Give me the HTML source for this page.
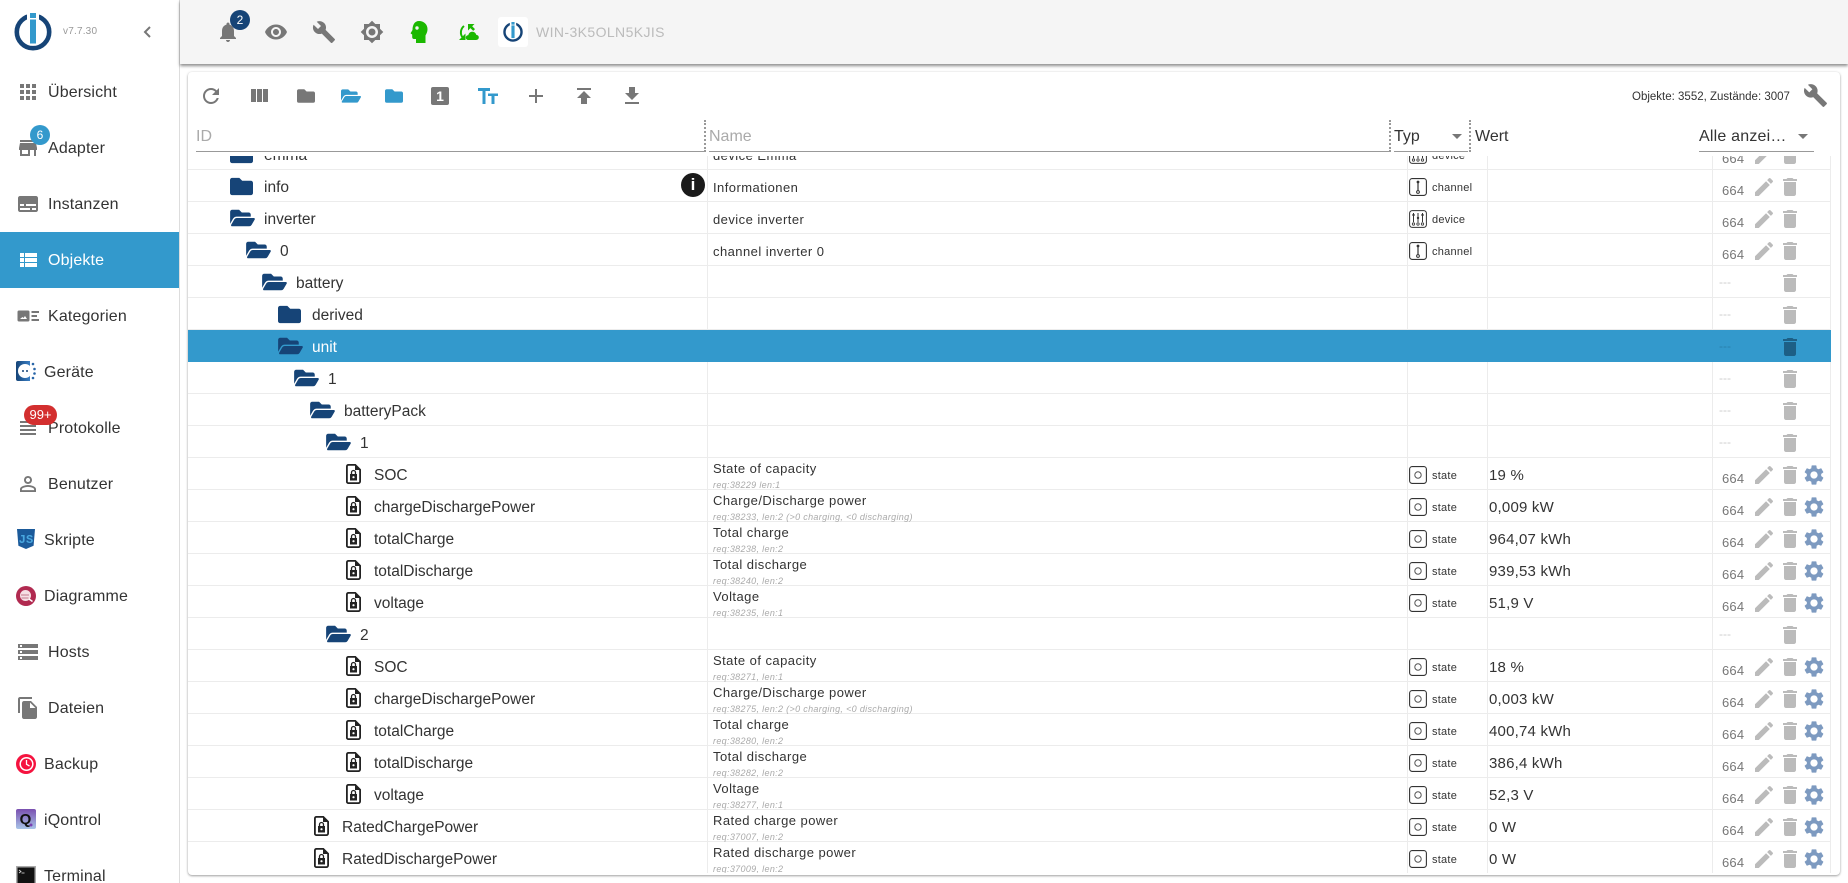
<!DOCTYPE html>
<html lang="de"><head><meta charset="utf-8"><title>Objekte</title>
<style>
html,body{margin:0;padding:0;width:1848px;height:883px;overflow:hidden;background:#fff;font-family:"Liberation Sans",sans-serif;color:#333}
.a,.a>*{position:absolute}
svg{position:absolute;display:block;overflow:visible}
#side{left:0;top:0;width:179px;height:883px;border-right:1px solid #ddd;overflow:hidden;background:#fff}
.n{position:absolute;left:0;width:179px;height:56px;line-height:56px;font-size:16px;letter-spacing:.15px;color:#333}
.n span{position:absolute;left:48px;top:1px}
.n.m span{left:44px}
.n svg{left:16px;top:16px;width:24px;height:24px;fill:#777}
.n.s{background:#39c;color:#fff}.n.s svg{fill:#fff}
#top{left:180px;top:0;width:1668px;height:64px;background:#f5f5f5;box-shadow:0 2px 3px rgba(0,0,0,.45)}
#top svg{fill:#777}
.badge{position:absolute;border-radius:10px;color:#fff;text-align:center;font-size:12px;height:20px;line-height:20px}
#panel{left:188px;top:72px;width:1652px;height:803px;background:#fff;border-radius:4px;box-shadow:0 1px 2px rgba(0,0,0,.35),0 0 3px rgba(0,0,0,.08)}
.t{fill:#777;width:24px;height:24px;top:84px}
.hd{position:absolute;top:126px;line-height:22px;font-size:16px}
.ul{position:absolute;top:151px;height:1px;background:#999}
.dot{position:absolute;top:120px;height:32px;border-left:2px dotted #999}
#list{left:188px;top:154px;width:1643px;height:719px;overflow:hidden;clip-path:inset(2px -2px 0 0)}
.v{position:absolute;top:0;width:1px;height:719px;background:#ececec}
.r{position:absolute;left:0;width:1643px;height:32px;border-bottom:1px solid #ececec;box-sizing:border-box}
.r.sel{background:#39c;height:32px;border:0}
.f{width:23px;height:23px;top:4.500px;fill:#164477}
.o{width:25px;height:22px;top:5px;fill:#164477}
.d{position:absolute;top:8px;line-height:20px;font-size:15.5px;color:#333;white-space:nowrap}
.nm{position:absolute;left:525px;top:8px;line-height:20px;font-size:13px;letter-spacing:.45px;color:#333;white-space:nowrap}
.nm.x{top:1px;line-height:20px}
.sb{position:absolute;left:525px;top:20px;line-height:14px;font-size:9px;font-style:italic;color:#aaa;white-space:nowrap;letter-spacing:.33px}
.ti{left:1221px;top:8px;width:18px;height:18px;fill:none;stroke:#333}
.tt{position:absolute;left:1244px;top:8px;line-height:20px;font-size:11px;letter-spacing:.25px;color:#333}
.vl{position:absolute;left:1301px;top:8px;line-height:20px;font-size:15px;letter-spacing:.2px;color:#333}
.rt{position:absolute;left:1534px;top:11px;line-height:20px;font-size:13px;letter-spacing:.2px;color:#777}
.dsh{position:absolute;left:1531px;top:6px;line-height:20px;font-size:12px;color:#ccc}
.p,.b,.g{width:24px;height:24px;top:5px}
.p{left:1564px;fill:#bbb}.b{left:1590px;fill:#bbb}.g{left:1614px;fill:#7d9ac0}
.lk{width:15px;height:20px;top:6px}
</style></head><body>
<svg width="0" height="0" style="position:absolute">
<defs>
<symbol id="apps" viewBox="0 0 24 24"><path d="M4 8h4V4H4v4zm6 12h4v-4h-4v4zm-6 0h4v-4H4v4zm0-6h4v-4H4v4zm6 0h4v-4h-4v4zm6-10v4h4V4h-4zm-6 4h4V4h-4v4zm6 6h4v-4h-4v4zm0 6h4v-4h-4v4z"/></symbol>
<symbol id="store" viewBox="0 0 24 24"><path d="M20 4H4v2h16V4zm1 10v-2l-1-5H4l-1 5v2h1v6h10v-6h4v6h2v-6h1zm-9 4H6v-4h6v4z"/></symbol>
<symbol id="subt" viewBox="0 0 24 24"><path d="M20 4H4c-1.100 0-2 .9-2 2v12c0 1.100.9 2 2 2h16c1.100 0 2-.9 2-2V6c0-1.100-.9-2-2-2zM4 12h4v2H4v-2zm10 6H4v-2h10v2zm6 0h-4v-2h4v2zm0-4H10v-2h10v2z"/></symbol>
<symbol id="vlist" viewBox="0 0 24 24"><path d="M4 14h4v-4H4v4zm0 5h4v-4H4v4zM4 9h4V5H4v4zm5 5h12v-4H9v4zm0 5h12v-4H9v4zM9 5v4h12V5H9z"/></symbol>
<symbol id="kat" viewBox="0 0 24 24"><path d="M3 6.500h9a1.500 1.500 0 0 1 1.500 1.500v8a1.500 1.500 0 0 1-1.500 1.500H3A1.500 1.500 0 0 1 1.500 16V8A1.500 1.500 0 0 1 3 6.500zM4 15h7l-2-3-1.500 2-1-1z"/><path d="M15.500 7H23v2h-7.500zM15.500 11H21v2h-5.500zM15.500 15H23v2h-7.500z"/></symbol>
<symbol id="head" viewBox="0 0 24 24"><path d="M4 15h16v-2H4v2zm0 4h16v-2H4v2zm0-8h16V9H4v2zm0-6v2h16V5H4z"/></symbol>
<symbol id="person" viewBox="0 0 24 24"><path d="M12 5.900c1.160 0 2.100.940 2.100 2.100s-.940 2.100-2.100 2.100S9.900 9.160 9.900 8s.940-2.100 2.100-2.100m0 9c2.970 0 6.100 1.460 6.100 2.100v1.100H5.900V17c0-.640 3.130-2.100 6.100-2.100M12 4C9.790 4 8 5.790 8 8s1.790 4 4 4 4-1.790 4-4-1.790-4-4-4zm0 9c-2.670 0-8 1.340-8 4v3h16v-3c0-2.660-5.330-4-8-4z"/></symbol>
<symbol id="storage" viewBox="0 0 24 24"><path d="M2 20h20v-4H2v4zm2-3h2v2H4v-2zM2 4v4h20V4H2zm4 3H4V5h2v2zm-4 7h20v-4H2v4zm2-3h2v2H4v-2z"/></symbol>
<symbol id="copy" viewBox="0 0 24 24"><path d="M16 1H4c-1.100 0-2 .9-2 2v14h2V3h12V1zm-1 4l6 6v10c0 1.100-.9 2-2 2H7.990C6.890 23 6 22.100 6 21l.010-14c0-1.100.890-2 1.990-2h7zm-1 7h5.500L14 6.500V12z"/></symbol>
<symbol id="bell" viewBox="0 0 24 24"><path d="M12 22c1.100 0 2-.9 2-2h-4c0 1.100.890 2 2 2zm6-6v-5c0-3.070-1.640-5.640-4.500-6.320V4c0-.830-.670-1.500-1.500-1.500s-1.500.670-1.500 1.500v.680C7.630 5.360 6 7.920 6 11v5l-2 2v1h16v-1l-2-2z"/></symbol>
<symbol id="eye" viewBox="0 0 24 24"><path d="M12 4.500C7 4.500 2.730 7.610 1 12c1.730 4.390 6 7.500 11 7.500s9.270-3.110 11-7.500c-1.730-4.390-6-7.500-11-7.500zM12 17c-2.760 0-5-2.240-5-5s2.240-5 5-5 5 2.240 5 5-2.240 5-5 5zm0-8c-1.660 0-3 1.340-3 3s1.340 3 3 3 3-1.340 3-3-1.340-3-3-3z"/></symbol>
<symbol id="build" viewBox="0 0 24 24"><path d="M22.700 19l-9.100-9.100c.9-2.300.4-5-1.500-6.900-2-2-5-2.400-7.400-1.300L9 6 6 9 1.600 4.700C.4 7.100.9 10.100 2.900 12.100c1.900 1.900 4.600 2.400 6.900 1.500l9.100 9.100c.4.4 1 .4 1.400 0l2.300-2.300c.5-.4.5-1.100.1-1.400z"/></symbol>
<symbol id="bright" viewBox="0 0 24 24"><path fill-rule="evenodd" d="M20 8.690V4h-4.690L12 .69 8.690 4H4v4.690L.69 12 4 15.310V20h4.690L12 23.310 15.310 20H20v-4.690L23.310 12 20 8.690zM12 18c-3.310 0-6-2.690-6-6s2.690-6 6-6 6 2.690 6 6-2.690 6-6 6zm0-9.500a3.500 3.500 0 1 0 0 7 3.500 3.500 0 0 0 0-7z"/></symbol>
<symbol id="refresh" viewBox="0 0 24 24"><path d="M17.650 6.350C16.200 4.900 14.210 4 12 4c-4.420 0-7.990 3.580-7.990 8s3.570 8 7.990 8c3.730 0 6.840-2.550 7.730-6h-2.080c-.820 2.330-3.040 4-5.650 4-3.310 0-6-2.690-6-6s2.690-6 6-6c1.660 0 3.140.690 4.220 1.780L13 11h7V4l-2.350 2.350z"/></symbol>
<symbol id="cols" viewBox="0 0 24 24"><path d="M10 18h5V5h-5v13zm-6 0h5V5H4v13zM16 5v13h5V5h-5z"/></symbol>
<symbol id="fold" viewBox="0 0 512 512"><path d="M464 128H272l-64-64H48C21.490 64 0 85.490 0 112v288c0 26.510 21.490 48 48 48h416c26.510 0 48-21.490 48-48V176c0-26.510-21.490-48-48-48z"/></symbol>
<symbol id="open" viewBox="0 0 576 512"><path d="M572.694 292.093L500.270 416.248A63.997 63.997 0 0 1 444.989 448H45.025c-18.523 0-30.064-20.093-20.731-36.093l72.424-124.155A64 64 0 0 1 152 256h399.964c18.523 0 30.064 20.093 20.730 36.093zM152 224h328v-48c0-26.510-21.490-48-48-48H272l-64-64H48C21.490 64 0 85.490 0 112v278.046l69.077-118.418C86.214 242.250 117.989 224 152 224z"/></symbol>
<symbol id="plus" viewBox="0 0 24 24"><path d="M19 13h-6v6h-2v-6H5v-2h6V5h2v6h6v2z"/></symbol>
<symbol id="pub" viewBox="0 0 24 24"><path d="M5 4v2h14V4H5zm0 10h4v6h6v-6h4l-7-7-7 7z"/></symbol>
<symbol id="get" viewBox="0 0 24 24"><path d="M19 9h-4V3H9v6H5l7 7 7-7zM5 18v2h14v-2H5z"/></symbol>
<symbol id="ed" viewBox="0 0 24 24"><path d="M3 17.250V21h3.750L17.810 9.940l-3.750-3.750L3 17.250zM20.710 7.040c.390-.390.390-1.020 0-1.410l-2.340-2.340c-.390-.390-1.020-.390-1.410 0l-1.830 1.830 3.750 3.750 1.830-1.830z"/></symbol>
<symbol id="del" viewBox="0 0 24 24"><path d="M6 19c0 1.100.9 2 2 2h8c1.100 0 2-.9 2-2V7H6v12zM19 4h-3.500l-1-1h-5l-1 1H5v2h14V4z"/></symbol>
<symbol id="gear" viewBox="0 0 24 24"><path d="M19.140 12.940c.040-.300.060-.610.060-.940 0-.320-.020-.640-.070-.940l2.030-1.580c.180-.140.230-.410.120-.610l-1.920-3.320c-.120-.220-.370-.290-.590-.220l-2.390.960c-.500-.380-1.030-.700-1.620-.940L14.400 2.810c-.040-.240-.240-.410-.480-.410h-3.840c-.240 0-.430.170-.470.410L9.250 5.350c-.590.240-1.130.570-1.620.940L5.240 5.330c-.220-.080-.470 0-.590.220L2.740 8.870c-.120.210-.080.470.120.610l2.030 1.580c-.050.300-.090.630-.09.940s.020.640.070.940l-2.030 1.580c-.180.140-.230.410-.12.610l1.920 3.320c.120.220.370.290.590.220l2.390-.960c.500.380 1.030.700 1.620.940l.360 2.540c.050.240.240.410.480.410h3.840c.240 0 .440-.170.470-.410l.360-2.540c.590-.240 1.130-.560 1.620-.940l2.390.960c.220.080.470 0 .590-.220l1.920-3.320c.120-.220.070-.470-.120-.610l-2.010-1.580zM12 15.600c-1.980 0-3.600-1.620-3.600-3.600s1.620-3.600 3.600-3.600 3.600 1.620 3.600 3.600-1.620 3.600-3.600 3.600z"/></symbol>
<symbol id="logo" viewBox="0 0 38 38"><circle cx="19" cy="19" r="16.200" fill="none" stroke="#164477" stroke-width="4.600"/><rect x="13" y="0" width="12" height="12" fill="#fff"/><rect x="16" y="0" width="6" height="5" fill="#39c"/><rect x="16" y="6.500" width="6" height="24" fill="#39c"/></symbol>
<symbol id="lock" viewBox="0 0 15 20"><path fill="none" stroke="#222" stroke-width="1.800" d="M2.300.9h7l4.800 4.800v11.700a1.700 1.700 0 0 1-1.700 1.700H2.300a1.400 1.400 0 0 1-1.400-1.700V2.600A1.700 1.700 0 0 1 2.300.9z"/><path fill="#222" d="M9 .8l5.200 5.200H9z"/><path fill="#222" d="M4 10h7v6.500H4z"/><path fill="none" stroke="#222" stroke-width="1.300" d="M5.500 10V8.500a2 2 0 0 1 4 0V10"/><circle cx="7.500" cy="13.200" r="1.100" fill="#fff"/></symbol>
<symbol id="st" viewBox="0 0 18 18"><rect x=".6" y=".6" width="16.800" height="16.800" rx="2.600" stroke-width="1.100"/><circle cx="9" cy="9" r="3.200" stroke-width="1" stroke="#555"/></symbol>
<symbol id="ch" viewBox="0 0 18 18"><rect x=".6" y=".6" width="16.800" height="16.800" rx="2.600" stroke-width="1.100"/><circle cx="9" cy="4" r="1.400" fill="#333" stroke="none"/><path d="M9 4v9" stroke-width="1.200"/><circle cx="9" cy="14" r="1.400" stroke-width="1"/></symbol>
<symbol id="dv" viewBox="0 0 18 18"><rect x=".6" y=".6" width="16.800" height="16.800" rx="2.600" stroke-width="1"/><path d="M4.500 3v9M9 3v9M13.500 3v9" stroke-width="1"/><circle cx="4.500" cy="5" r="1.200" fill="#333" stroke="none"/><circle cx="9" cy="8" r="1.200" fill="#333" stroke="none"/><circle cx="13.500" cy="5" r="1.200" fill="#333" stroke="none"/><circle cx="4.500" cy="14" r="1.200" stroke-width=".8"/><circle cx="9" cy="14" r="1.200" stroke-width=".8"/><circle cx="13.500" cy="14" r="1.200" stroke-width=".8"/></symbol>
</defs></svg>

<div id="side" class="a">
<svg style="left:14px;top:13px;width:38px;height:38px"><use href="#logo"/></svg>
<div style="left:63px;top:26px;font-size:10px;line-height:12px;color:#999;letter-spacing:.2px">v7.7.30</div>
<svg style="left:141px;top:25px;width:12px;height:14px" viewBox="0 0 12 14"><path d="M9 2L4 7l5 5" fill="none" stroke="#777" stroke-width="2"/></svg>
<div class="n" style="top:64px"><svg><use href="#apps"/></svg><span>Übersicht</span></div>
<div class="n" style="top:120px"><svg><use href="#store"/></svg><span>Adapter</span></div>
<div class="n" style="top:176px"><svg><use href="#subt"/></svg><span>Instanzen</span></div>
<div class="n s" style="top:232px"><svg><use href="#vlist"/></svg><span>Objekte</span></div>
<div class="n" style="top:288px"><svg><use href="#kat"/></svg><span>Kategorien</span></div>
<div class="n m" style="top:344px"><svg style="left:16px;top:17px;width:20px;height:20px" viewBox="0 0 20 20"><defs><linearGradient id="gd" x1="0" x2="1"><stop offset="0" stop-color="#164477"/><stop offset="1" stop-color="#3a7fc4"/></linearGradient></defs><path d="M2 0h12v20H2a2 2 0 0 1-2-2V2a2 2 0 0 1 2-2z" fill="url(#gd)"/><circle cx="9" cy="10" r="7" fill="#fff"/><circle cx="7" cy="10" r="1" fill="#164477"/><circle cx="11" cy="10" r="1" fill="#164477"/><circle cx="17" cy="3" r="1.300" fill="#2a66a8"/><circle cx="18.500" cy="8" r="1.300" fill="#2a66a8"/><circle cx="18.500" cy="12.500" r="1.300" fill="#2a66a8"/><circle cx="17" cy="17" r="1.300" fill="#2a66a8"/></svg><span>Geräte</span></div>
<div class="n" style="top:400px"><svg><use href="#head"/></svg><span>Protokolle</span></div>
<div class="n" style="top:456px"><svg><use href="#person"/></svg><span>Benutzer</span></div>
<div class="n m" style="top:512px"><svg style="left:17px;top:17px;width:18px;height:20px" viewBox="0 0 18 20"><path d="M0 0h18l-1.400 16.800L9 20l-7.600-3.200z" fill="#1b5a9a"/><text x="9" y="14" font-size="12" font-weight="700" text-anchor="middle" fill="#4aa8e0" font-family="Liberation Mono, monospace">JS</text></svg><span>Skripte</span></div>
<div class="n m" style="top:568px"><svg style="left:16px;top:18px;width:20px;height:20px" viewBox="0 0 20 20"><circle cx="10" cy="10" r="10" fill="#b12a50"/><circle cx="9.500" cy="9.500" r="5.500" fill="#f5dfe4"/><path d="M5 9h8M5.500 12h7" stroke="#c47a8c" stroke-width="1"/><path d="M13 13l3.500 2.500" stroke="#fff" stroke-width="1.500"/></svg><span>Diagramme</span></div>
<div class="n" style="top:624px"><svg><use href="#storage"/></svg><span>Hosts</span></div>
<div class="n" style="top:680px"><svg><use href="#copy"/></svg><span>Dateien</span></div>
<div class="n m" style="top:736px"><svg style="left:16px;top:18px;width:20px;height:20px" viewBox="0 0 20 20"><circle cx="10" cy="10" r="10" fill="#f5133f"/><circle cx="10.500" cy="10" r="6.300" fill="none" stroke="#fff" stroke-width="1.500"/><path d="M10.500 6v4.300l3 1.700" fill="none" stroke="#fff" stroke-width="1.300"/></svg><span>Backup</span></div>
<div class="n m" style="top:792px"><svg style="left:16px;top:17px;width:20px;height:20px" viewBox="0 0 20 20"><defs><linearGradient id="gq" x1="0" y1="0" x2="0" y2="1"><stop offset="0" stop-color="#7a4fb0"/><stop offset="1" stop-color="#a8c4e8"/></linearGradient></defs><rect width="20" height="20" rx="2" fill="url(#gq)"/><text x="9.500" y="15" font-size="15" font-weight="700" text-anchor="middle" fill="#111" font-family="Liberation Sans, sans-serif">Q</text><circle cx="15" cy="16" r="1.500" fill="#7a3fb0"/></svg><span>iQontrol</span></div>
<div class="n m" style="top:848px"><svg style="left:16px;top:18px;width:20px;height:20px" viewBox="0 0 20 20"><rect width="20" height="20" fill="#aaa"/><rect x="1.500" y="1.500" width="17" height="17" fill="#111"/><path d="M3 4l2 1.500L3 7" fill="none" stroke="#ddd" stroke-width=".8"/><path d="M5.500 7h3" stroke="#ddd" stroke-width=".8"/></svg><span>Terminal</span></div>
<div class="badge" style="left:30px;top:125px;width:20px;background:#39c">6</div>
<div class="badge" style="left:24px;top:405px;width:33px;background:#d32f2f;font-size:13px">99+</div>
</div>

<div id="top" class="a">
<svg style="left:36px;top:20px;width:24px;height:24px"><use href="#bell"/></svg>
<div class="badge" style="left:50px;top:10px;width:20px;background:#164477">2</div>
<svg style="left:84px;top:20px;width:24px;height:24px"><use href="#eye"/></svg>
<svg style="left:132px;top:20px;width:24px;height:24px"><use href="#build"/></svg>
<svg style="left:180px;top:20px;width:24px;height:24px"><use href="#bright"/></svg>
<svg style="left:231px;top:21px;width:17px;height:22px;fill:#1bb800" viewBox="0 0 17 22"><path d="M8 0c5 0 8.500 3.500 8.500 8 0 3-1 4.500-2 6.500V22H5v-4H3c-1.200 0-1.800-.8-1.800-2v-2.500L0 12.700c-.5-.3-.4-.8 0-1.200L1.500 9C1.500 4 3.500 0 8 0z"/><circle cx="6" cy="7" r="1.700" fill="#f5f5f5"/></svg>
<svg style="left:278px;top:23px;width:22px;height:19px" viewBox="0 0 22 19"><path d="M6 3C2.300 6 2 11.500 4.700 14.500" fill="none" stroke="#1bb800" stroke-width="2"/><path d="M1 17h6.500v-6.500z" fill="#1bb800"/><path d="M10 1h6.500l-2.300 2.300 2.800 2.800-1.800 1.800-2.800-2.800L10 7.500z" fill="#1bb800"/><path d="M10.500 17c-1.600 0-2.700-1.100-2.700-2.400 0-1.400 1.100-2.400 2.500-2.500.5-2 2-3.300 4-3.300 2 0 3.500 1.300 4 3.100 1.500.1 2.500 1.100 2.500 2.500 0 1.400-1.100 2.600-2.800 2.600z" fill="#1bb800"/></svg>
<div style="left:318px;top:17px;width:30px;height:30px;background:#fff;border-radius:3px"></div>
<svg style="left:323px;top:22px;width:20px;height:20px"><use href="#logo"/></svg>
<div style="left:356px;top:23px;font-size:14px;line-height:18px;color:#bbb;letter-spacing:.4px;white-space:nowrap">WIN-3K5OLN5KJIS</div>
</div>

<div id="panel" class="a"></div>

<div class="a" style="left:0;top:0;width:1848px;height:160px;pointer-events:none">
<svg class="t" style="left:199px"><use href="#refresh"/></svg>
<svg class="t" style="left:247px"><use href="#cols"/></svg>
<svg class="t" style="left:297px;width:18px;height:18px;top:87px"><use href="#fold"/></svg>
<svg class="t" style="left:341px;width:20px;height:18px;top:87px;fill:#39c"><use href="#open"/></svg>
<svg class="t" style="left:385px;width:18px;height:18px;top:87px;fill:#39c"><use href="#fold"/></svg>
<div style="left:431px;top:87px;width:18px;height:18px;background:#777;border-radius:2px;color:#fff;font-size:14px;font-weight:700;line-height:18px;text-align:center">1</div>
<svg style="left:478px;top:88px;width:20px;height:16px;fill:#39c" viewBox="0 0 20 16"><path d="M0 0h12v3H7.500v13h-3V3H0z"/><path d="M10 5.500h10V8h-3.500v8h-3V8H10z"/></svg>
<svg class="t" style="left:524px"><use href="#plus"/></svg>
<svg class="t" style="left:572px"><use href="#pub"/></svg>
<svg class="t" style="left:620px"><use href="#get"/></svg>
<div style="left:1632px;top:89px;line-height:16px;font-size:11.5px;color:#333;white-space:nowrap">Objekte: 3552, Zustände: 3007</div>
<svg style="left:1803px;top:83px;width:25px;height:25px;fill:#777"><use href="#build"/></svg>
<div class="hd" style="left:196px;color:#aaa">ID</div>
<div class="ul" style="left:196px;width:508px"></div>
<div class="dot" style="left:704px"></div>
<div class="hd" style="left:709px;color:#aaa">Name</div>
<div class="ul" style="left:709px;width:680px"></div>
<div class="dot" style="left:1389px"></div>
<div class="hd" style="left:1394px;color:#333">Typ</div>
<div class="ul" style="left:1394px;width:74px"></div>
<div style="left:1452px;top:134px;width:0;height:0;border:5px solid transparent;border-top-color:#777;border-bottom:0"></div>
<div class="dot" style="left:1469px"></div>
<div class="hd" style="left:1475px;color:#333">Wert</div>
<div class="hd" style="left:1699px;color:#333;letter-spacing:.2px">Alle anzei…</div>
<div class="ul" style="left:1699px;width:115px"></div>
<div style="left:1798px;top:134px;width:0;height:0;border:5px solid transparent;border-top-color:#777;border-bottom:0"></div>
</div>

<div id="list" class="a">
<div class="v" style="left:519px"></div><div class="v" style="left:1219px"></div><div class="v" style="left:1299px"></div><div class="v" style="left:1524px"></div><div class="v" style="left:1642px"></div>

<div class="r" style="top:-16px"><svg class="f" style="left:42px"><use href="#fold"/></svg><div class="d" style="left:76px">emma</div><div class="nm">device Emma</div><svg class="ti"><use href="#dv"/></svg><div class="tt">device</div><div class="rt">664</div><svg class="p"><use href="#ed"/></svg><svg class="b"><use href="#del"/></svg></div>
<div class="r" style="top:16px"><svg class="f" style="left:42px"><use href="#fold"/></svg><div class="d" style="left:76px">info</div><div style="position:absolute;left:493px;top:3px;width:24px;height:24px;border-radius:50%;background:#1a1a1a;color:#fff;font:700 17px/24px 'Liberation Sans',sans-serif;text-align:center">i</div><div class="nm">Informationen</div><svg class="ti"><use href="#ch"/></svg><div class="tt">channel</div><div class="rt">664</div><svg class="p"><use href="#ed"/></svg><svg class="b"><use href="#del"/></svg></div>
<div class="r" style="top:48px"><svg class="o" style="left:42px"><use href="#open"/></svg><div class="d" style="left:76px">inverter</div><div class="nm">device inverter</div><svg class="ti"><use href="#dv"/></svg><div class="tt">device</div><div class="rt">664</div><svg class="p"><use href="#ed"/></svg><svg class="b"><use href="#del"/></svg></div>
<div class="r" style="top:80px"><svg class="o" style="left:58px"><use href="#open"/></svg><div class="d" style="left:92px">0</div><div class="nm">channel inverter 0</div><svg class="ti"><use href="#ch"/></svg><div class="tt">channel</div><div class="rt">664</div><svg class="p"><use href="#ed"/></svg><svg class="b"><use href="#del"/></svg></div>
<div class="r" style="top:112px"><svg class="o" style="left:74px"><use href="#open"/></svg><div class="d" style="left:108px">battery</div><div class="dsh">---</div><svg class="b"><use href="#del"/></svg></div>
<div class="r" style="top:144px"><svg class="f" style="left:90px"><use href="#fold"/></svg><div class="d" style="left:124px">derived</div><div class="dsh">---</div><svg class="b"><use href="#del"/></svg></div>
<div class="r sel" style="top:176px"><svg class="o" style="left:90px"><use href="#open"/></svg><div class="d" style="left:124px;color:#fff">unit</div><div class="dsh" style="color:#2a7fab">---</div><svg class="b" style="fill:#1d5f85"><use href="#del"/></svg></div>
<div class="r" style="top:208px"><svg class="o" style="left:106px"><use href="#open"/></svg><div class="d" style="left:140px">1</div><div class="dsh">---</div><svg class="b"><use href="#del"/></svg></div>
<div class="r" style="top:240px"><svg class="o" style="left:122px"><use href="#open"/></svg><div class="d" style="left:156px">batteryPack</div><div class="dsh">---</div><svg class="b"><use href="#del"/></svg></div>
<div class="r" style="top:272px"><svg class="o" style="left:138px"><use href="#open"/></svg><div class="d" style="left:172px">1</div><div class="dsh">---</div><svg class="b"><use href="#del"/></svg></div>

<div class="r" style="top:304px"><svg class="lk" style="left:158px"><use href="#lock"/></svg><div class="d" style="left:186px">SOC</div><div class="nm x">State of capacity</div><div class="sb">req:38229 len:1</div><svg class="ti"><use href="#st"/></svg><div class="tt">state</div><div class="vl">19 %</div><div class="rt">664</div><svg class="p"><use href="#ed"/></svg><svg class="b"><use href="#del"/></svg><svg class="g"><use href="#gear"/></svg></div>
<div class="r" style="top:336px"><svg class="lk" style="left:158px"><use href="#lock"/></svg><div class="d" style="left:186px">chargeDischargePower</div><div class="nm x">Charge/Discharge power</div><div class="sb">req:38233, len:2 (&gt;0 charging, &lt;0 discharging)</div><svg class="ti"><use href="#st"/></svg><div class="tt">state</div><div class="vl">0,009 kW</div><div class="rt">664</div><svg class="p"><use href="#ed"/></svg><svg class="b"><use href="#del"/></svg><svg class="g"><use href="#gear"/></svg></div>
<div class="r" style="top:368px"><svg class="lk" style="left:158px"><use href="#lock"/></svg><div class="d" style="left:186px">totalCharge</div><div class="nm x">Total charge</div><div class="sb">req:38238, len:2</div><svg class="ti"><use href="#st"/></svg><div class="tt">state</div><div class="vl">964,07 kWh</div><div class="rt">664</div><svg class="p"><use href="#ed"/></svg><svg class="b"><use href="#del"/></svg><svg class="g"><use href="#gear"/></svg></div>
<div class="r" style="top:400px"><svg class="lk" style="left:158px"><use href="#lock"/></svg><div class="d" style="left:186px">totalDischarge</div><div class="nm x">Total discharge</div><div class="sb">req:38240, len:2</div><svg class="ti"><use href="#st"/></svg><div class="tt">state</div><div class="vl">939,53 kWh</div><div class="rt">664</div><svg class="p"><use href="#ed"/></svg><svg class="b"><use href="#del"/></svg><svg class="g"><use href="#gear"/></svg></div>
<div class="r" style="top:432px"><svg class="lk" style="left:158px"><use href="#lock"/></svg><div class="d" style="left:186px">voltage</div><div class="nm x">Voltage</div><div class="sb">req:38235, len:1</div><svg class="ti"><use href="#st"/></svg><div class="tt">state</div><div class="vl">51,9 V</div><div class="rt">664</div><svg class="p"><use href="#ed"/></svg><svg class="b"><use href="#del"/></svg><svg class="g"><use href="#gear"/></svg></div>
<div class="r" style="top:464px"><svg class="o" style="left:138px"><use href="#open"/></svg><div class="d" style="left:172px">2</div><div class="dsh">---</div><svg class="b"><use href="#del"/></svg></div>

<div class="r" style="top:496px"><svg class="lk" style="left:158px"><use href="#lock"/></svg><div class="d" style="left:186px">SOC</div><div class="nm x">State of capacity</div><div class="sb">req:38271, len:1</div><svg class="ti"><use href="#st"/></svg><div class="tt">state</div><div class="vl">18 %</div><div class="rt">664</div><svg class="p"><use href="#ed"/></svg><svg class="b"><use href="#del"/></svg><svg class="g"><use href="#gear"/></svg></div>
<div class="r" style="top:528px"><svg class="lk" style="left:158px"><use href="#lock"/></svg><div class="d" style="left:186px">chargeDischargePower</div><div class="nm x">Charge/Discharge power</div><div class="sb">req:38275, len:2 (&gt;0 charging, &lt;0 discharging)</div><svg class="ti"><use href="#st"/></svg><div class="tt">state</div><div class="vl">0,003 kW</div><div class="rt">664</div><svg class="p"><use href="#ed"/></svg><svg class="b"><use href="#del"/></svg><svg class="g"><use href="#gear"/></svg></div>
<div class="r" style="top:560px"><svg class="lk" style="left:158px"><use href="#lock"/></svg><div class="d" style="left:186px">totalCharge</div><div class="nm x">Total charge</div><div class="sb">req:38280, len:2</div><svg class="ti"><use href="#st"/></svg><div class="tt">state</div><div class="vl">400,74 kWh</div><div class="rt">664</div><svg class="p"><use href="#ed"/></svg><svg class="b"><use href="#del"/></svg><svg class="g"><use href="#gear"/></svg></div>
<div class="r" style="top:592px"><svg class="lk" style="left:158px"><use href="#lock"/></svg><div class="d" style="left:186px">totalDischarge</div><div class="nm x">Total discharge</div><div class="sb">req:38282, len:2</div><svg class="ti"><use href="#st"/></svg><div class="tt">state</div><div class="vl">386,4 kWh</div><div class="rt">664</div><svg class="p"><use href="#ed"/></svg><svg class="b"><use href="#del"/></svg><svg class="g"><use href="#gear"/></svg></div>
<div class="r" style="top:624px"><svg class="lk" style="left:158px"><use href="#lock"/></svg><div class="d" style="left:186px">voltage</div><div class="nm x">Voltage</div><div class="sb">req:38277, len:1</div><svg class="ti"><use href="#st"/></svg><div class="tt">state</div><div class="vl">52,3 V</div><div class="rt">664</div><svg class="p"><use href="#ed"/></svg><svg class="b"><use href="#del"/></svg><svg class="g"><use href="#gear"/></svg></div>
<div class="r" style="top:656px"><svg class="lk" style="left:126px"><use href="#lock"/></svg><div class="d" style="left:154px">RatedChargePower</div><div class="nm x">Rated charge power</div><div class="sb">req:37007, len:2</div><svg class="ti"><use href="#st"/></svg><div class="tt">state</div><div class="vl">0 W</div><div class="rt">664</div><svg class="p"><use href="#ed"/></svg><svg class="b"><use href="#del"/></svg><svg class="g"><use href="#gear"/></svg></div>
<div class="r" style="top:688px"><svg class="lk" style="left:126px"><use href="#lock"/></svg><div class="d" style="left:154px">RatedDischargePower</div><div class="nm x">Rated discharge power</div><div class="sb">req:37009, len:2</div><svg class="ti"><use href="#st"/></svg><div class="tt">state</div><div class="vl">0 W</div><div class="rt">664</div><svg class="p"><use href="#ed"/></svg><svg class="b"><use href="#del"/></svg><svg class="g"><use href="#gear"/></svg></div>
</div>
</body></html>
